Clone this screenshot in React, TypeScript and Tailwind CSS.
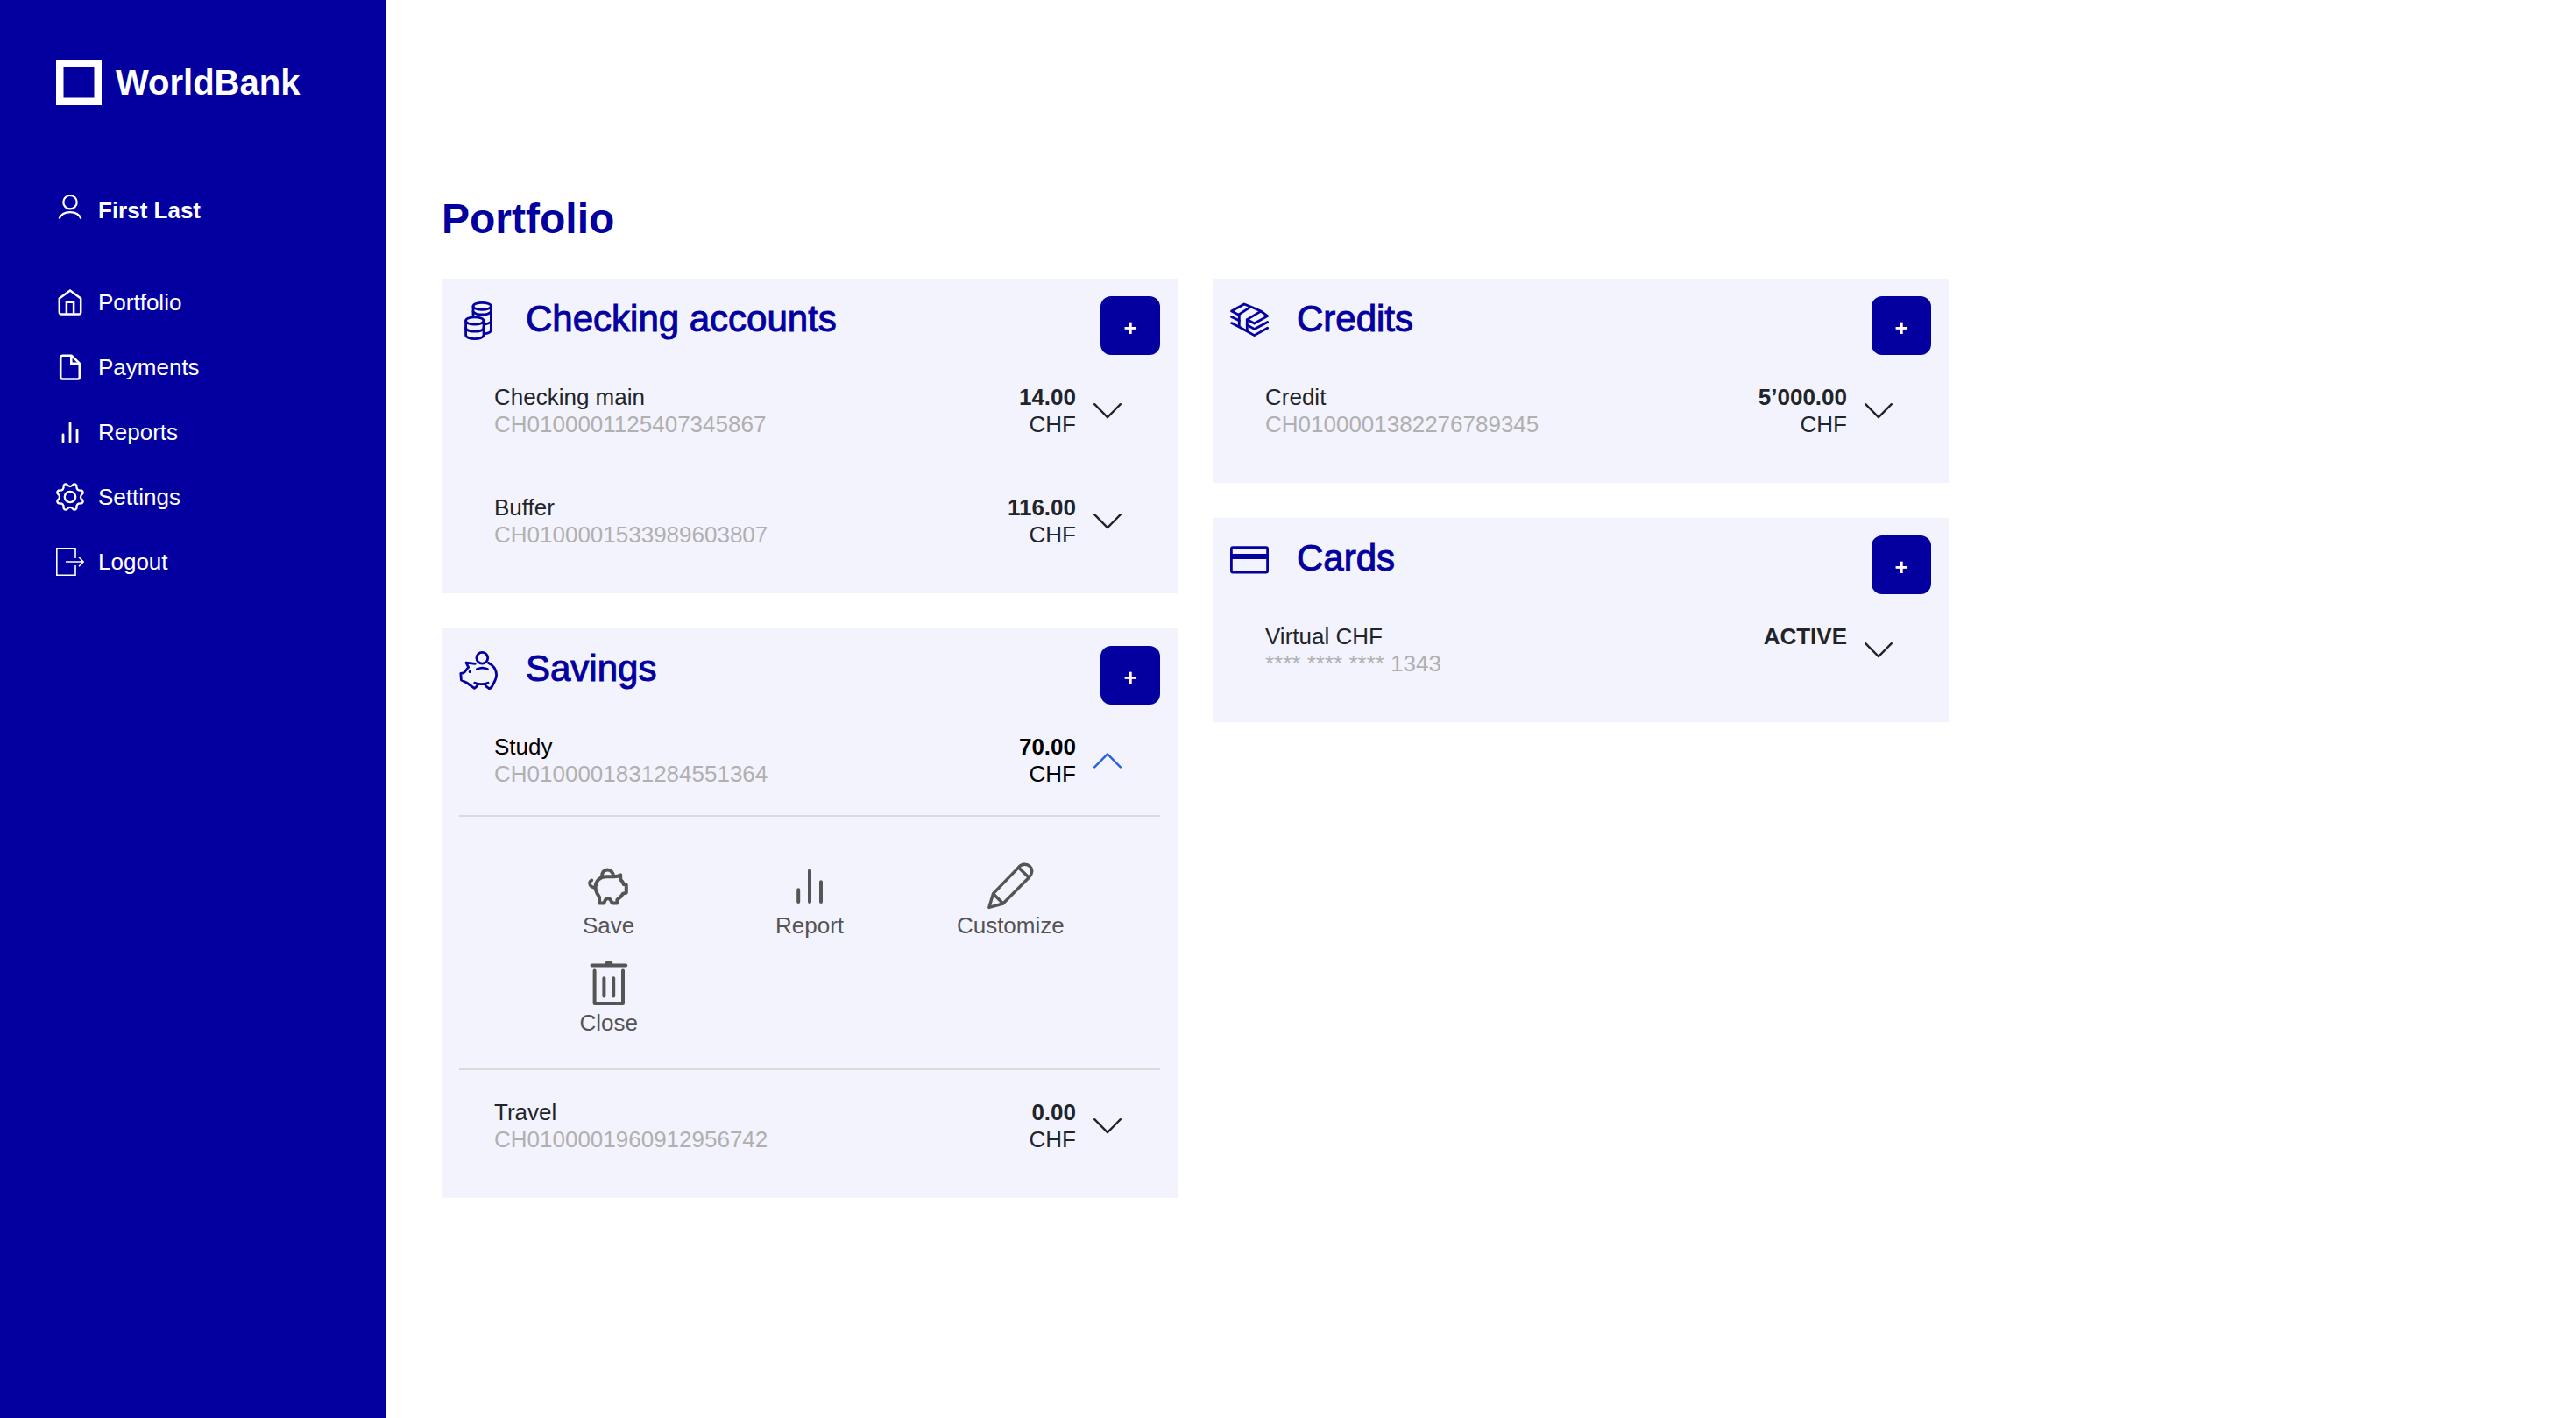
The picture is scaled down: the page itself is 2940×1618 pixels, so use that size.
import type { ReactNode } from "react";

/* ---------- Sidebar icons ---------- */

function UserIcon() {
  return (
    <svg width="32" height="40" viewBox="0 0 32 40" fill="none" stroke="currentColor" strokeWidth="2.200" aria-hidden="true">
      <circle cx="16" cy="10.700" r="7.700" />
      <path d="M3.600 29.600C5.600 24.600 10.400 22.200 16 22.200S26.400 24.600 28.400 29.600" />
    </svg>
  );
}

function HomeIcon() {
  return (
    <svg width="32" height="32" viewBox="0 0 32 32" fill="none" stroke="currentColor" strokeWidth="2.500" strokeLinejoin="round" aria-hidden="true">
      <path d="M3.800 11.400L16 2.400l12.200 9v16a2.200 2.200 0 0 1-2.200 2.200H6a2.200 2.200 0 0 1-2.200-2.200z" />
      <path d="M11.900 29V15.800h8.200V29" strokeLinejoin="miter" />
    </svg>
  );
}

function FileIcon() {
  return (
    <svg width="32" height="32" viewBox="0 0 32 32" fill="none" stroke="currentColor" strokeWidth="2.600" strokeLinejoin="round" aria-hidden="true">
      <path d="M17.500 2.700H7.400a2.200 2.200 0 0 0-2.200 2.200v22.400a2.200 2.200 0 0 0 2.200 2.200h17.200a2.200 2.200 0 0 0 2.200-2.200V11.600z" />
      <path d="M17.300 3v8.800h9" strokeLinejoin="miter" />
    </svg>
  );
}

function BarsIcon() {
  return (
    <svg width="32" height="32" viewBox="0 0 32 32" fill="none" stroke="currentColor" strokeWidth="2.800" strokeLinecap="round" aria-hidden="true">
      <path d="M8 19v8M16 5.600V27M24 13.600V27" />
    </svg>
  );
}

function polar(deg: number, r: number) {
  const a = (deg * Math.PI) / 180;
  return `${(16 + r * Math.cos(a)).toFixed(2)} ${(16 + r * Math.sin(a)).toFixed(2)}`;
}

const gearPath =
  Array.from({ length: 8 }, (_, i) => {
    const a = 22.5 + i * 45;
    return `${i === 0 ? "M" : "L"}${polar(a - 7, 15)}Q${polar(a, 16.4)} ${polar(a + 7, 15)}Q${polar(a + 22.5, 9.4)} ${polar(a + 38, 15)}`;
  }).join("") + "z";

function GearIcon() {
  return (
    <svg width="32" height="32" viewBox="0 0 32 32" fill="none" stroke="currentColor" strokeWidth="2.300" strokeLinejoin="round" className="overflow-visible" aria-hidden="true">
      <path d={gearPath} />
      <circle cx="16" cy="16" r="6.200" />
    </svg>
  );
}

function LogoutIcon() {
  return (
    <svg width="32" height="32" viewBox="0 0 32 32" fill="none" stroke="currentColor" strokeWidth="1.600" aria-hidden="true">
      <path d="M22 12V.8H.8v30.400H22V20" />
      <path d="M11 16h20M26 10.800l5.200 5.200-5.200 5.200" />
    </svg>
  );
}

/* ---------- Card heading icons ---------- */

function HeadingSvg({ children }: { children: ReactNode }) {
  return (
    <svg
      width="44"
      height="44"
      viewBox="0 0 44 44"
      fill="none"
      stroke="currentColor"
      strokeWidth="2.800"
      strokeLinecap="round"
      strokeLinejoin="round"
      className="mt-1.5 shrink-0"
      aria-hidden="true"
    >
      {children}
    </svg>
  );
}

function CoinsIcon() {
  return (
    <HeadingSvg>
      <ellipse cx="26.200" cy="5.400" rx="10.200" ry="4" />
      <path d="M16 5.400V16.600M36.400 5.400v27.400c0 1.800-2.600 3.200-6.200 3.800" />
      <path d="M16 11.600c2 2.400 6 3.400 10.200 3.400s8.200-1 10.200-3.400" />
      <path d="M29.600 25.800c4-.6 6.200-1.600 6.800-3.400" />
      <ellipse cx="17.800" cy="22" rx="10.200" ry="4.200" />
      <path d="M7.600 22v16.200c0 2.600 4.600 4.400 10.200 4.400s10.200-1.800 10.200-4.400V22" />
      <path d="M7.600 30c0 2.600 4.600 4.200 10.200 4.200s10.200-1.600 10.200-4.200" />
    </HeadingSvg>
  );
}

function PiggyCoinIcon() {
  return (
    <HeadingSvg>
      <circle cx="26.300" cy="7.800" r="6.400" />
      <path d="M18.200 14.400L8 13.200l2.600 5.200c-2.600 2.200-3 5.200-5.800 6.400l-3 .6.600 7.600 6.200 3L17.400 42.400l2.800-2.200 1.200-2.600" />
      <path d="M17.800 36.200c4 2 11.400 2 15.200 0M29.600 37.800l1.200 2.400 3.400 2.400c2 .2 2.600-.8 4.200-4 1.600-3.400 4.200-6.800 4.200-11.600 0-6-4-11.600-9.200-13.600" />
      <path d="M20.400 20.600c4-1.800 8.200-1.800 12 0" />
      <circle cx="12.300" cy="23.400" r="1.600" fill="currentColor" stroke="none" />
    </HeadingSvg>
  );
}

function BanknotesIcon() {
  return (
    <HeadingSvg>
      <path d="M10.300 15.400L1.600 11 16 3l9.300 3.700L35 11l7.600 5.600-15 8.400-8.300-4.400" />
      <path d="M22.600 6.600L10.300 14.600v14.200M34.600 11.400L19.300 20.600v12.600" />
      <path d="M1.600 17.600l8.700 4.200M1.600 24.600l8.700 4.400L27.600 38.600 42.600 30.200M19.300 26.800l8.300 4.600L42.600 23.400" />
    </HeadingSvg>
  );
}

function CardIcon() {
  return (
    <HeadingSvg>
      <rect x="1.400" y="7.600" width="41.200" height="28.400" rx="1.600" />
      <path d="M2 18h40" strokeWidth="6" strokeLinecap="butt" />
    </HeadingSvg>
  );
}

/* ---------- Account action icons ---------- */

function ActionSvg({ children, strokeWidth = 4 }: { children: ReactNode; strokeWidth?: number }) {
  return (
    <svg
      width="56"
      height="56"
      viewBox="0 0 56 56"
      fill="none"
      stroke="currentColor"
      strokeWidth={strokeWidth}
      strokeLinecap="round"
      strokeLinejoin="round"
      aria-hidden="true"
    >
      {children}
    </svg>
  );
}

function SaveIcon() {
  return (
    <ActionSvg>
      <path d="M32.600 17.200c3.600.2 6.600-.4 8.600-1.800v5c1.600 1.400 2.800 3.200 3.600 5.600l3 .8v8.800l-3.600 1c-1.600 2.800-3.800 5.200-6.800 6.800v4.200h-5.400c-1.400-.6-1-3.400-3-4.800-1.600-.8-2.800-.8-4.200 0-2 1.400-1.400 4.200-3 4.800h-4.400c-.6-2.600.2-5.400-.8-7.800-2.400-3.400-4-6.200-4-10.400 0-7.200 5.200-12.200 12-12.200z" />
      <path d="M19.800 17.600c0-5.200 2.800-8 6.400-8s7 2.800 7 7.400" />
      <path d="M8.400 21.400c-3.200 1.400-4 6.800 3.200 8.600" strokeWidth="3.600" />
    </ActionSvg>
  );
}

function ReportIcon() {
  return (
    <ActionSvg>
      <path d="M15.200 32.200V46M28 10.600V46M41 23.200V46" />
    </ActionSvg>
  );
}

function PencilIcon() {
  return (
    <ActionSvg strokeWidth={3.4}>
      <path d="M3.800 52.400L8.600 36.600 37.600 6.600C41 2.400 47 2.400 50.400 5.400S53.600 13.800 49.600 18L19.800 48z" />
      <path d="M8.800 37l10.800 10.800M37.600 7l11.400 11" />
    </ActionSvg>
  );
}

function TrashIcon() {
  return (
    <ActionSvg>
      <path d="M8.600 7.600h38.600" />
      <path d="M25.400 5h5" />
      <path d="M11.600 13.600V51h32.400V13.600M22.400 22.200v20.200M33.200 22.200v20.200" />
    </ActionSvg>
  );
}

/* ---------- Sidebar ---------- */

const navItems = [
  { label: "Portfolio", icon: <HomeIcon /> },
  { label: "Payments", icon: <FileIcon /> },
  { label: "Reports", icon: <BarsIcon /> },
  { label: "Settings", icon: <GearIcon /> },
  { label: "Logout", icon: <LogoutIcon /> },
];

function Sidebar() {
  return (
    <aside className="w-[440px] shrink-0 bg-[#0400a0] px-16 pt-17 text-white">
      <a href="#home" className="flex items-center gap-4">
        <svg width="52" height="52" viewBox="0 0 52 52" fill="none" stroke="currentColor" strokeWidth="8.500" aria-hidden="true">
          <rect x="4.250" y="4.250" width="43.500" height="43.500" />
        </svg>
        <span className="text-[40px] leading-[52px] font-bold">WorldBank</span>
      </a>
      <a href="#profile" className="mt-25 flex h-10 items-center gap-4 font-bold">
        <UserIcon />
        First Last
      </a>
      <nav className="mt-16">
        <ul className="flex flex-col gap-8">
          {navItems.map((item) => (
            <li key={item.label}>
              <a href={"#" + item.label.toLowerCase()} className="flex h-[42px] items-center gap-4">
                {item.icon}
                {item.label}
              </a>
            </li>
          ))}
        </ul>
      </nav>
    </aside>
  );
}

/* ---------- Cards ---------- */

function Card({ icon, title, children }: { icon: ReactNode; title: string; children: ReactNode }) {
  return (
    <section className="bg-[#f3f3fd] p-5">
      <header className="flex h-[67px] text-[#0400a0]">
        {icon}
        <h2 className="ml-8 grow text-[42px] leading-[52px] font-normal [-webkit-text-stroke:1px_currentColor]">{title}</h2>
        <button
          type="button"
          aria-label={"Add to " + title}
          className="h-full w-17 rounded-xl bg-[#0400a0] pt-1.5 font-bold text-white"
        >
          +
        </button>
      </header>
      {children}
    </section>
  );
}

type RowProps = { name: string; number: string; amount: string; currency?: string; open?: boolean };

function AccountRow({ name, number, amount, currency, open = false }: RowProps) {
  return (
    <button
      type="button"
      aria-expanded={open}
      className={
        open
          ? "flex w-full items-center pt-[33px] pr-11 pb-[31px] pl-10 text-left text-black"
          : "flex w-full items-center pt-[33px] pr-11 pb-[31px] pl-10 text-left text-[#212529]"
      }
    >
      <span className="grow">
        <span className="block">{name}</span>
        <span className="block text-[#b0b0b0]">{number}</span>
      </span>
      <span className="mr-5 self-start text-right">
        <span className="block font-bold">{amount}</span>
        {currency && <span className="block">{currency}</span>}
      </span>
      <svg
        width="32"
        height="18"
        viewBox="0 0 32 18"
        fill="none"
        stroke="currentColor"
        strokeWidth="2.400"
        strokeLinecap="round"
        strokeLinejoin="round"
        className={open ? "text-[#2962e0]" : ""}
        aria-hidden="true"
      >
        <path d={open ? "M1.200 16.400L16 1.400 30.800 16.400" : "M1.200 1.200L16 16.200 30.800 1.200"} />
      </svg>
    </button>
  );
}

const actions = [
  { label: "Save", icon: <SaveIcon /> },
  { label: "Report", icon: <ReportIcon /> },
  { label: "Customize", icon: <PencilIcon /> },
  { label: "Close", icon: <TrashIcon /> },
];

function ActionPanel() {
  return (
    <div className="grid grid-cols-3 gap-y-[22px] border-y-2 border-[#dadada] px-14 pt-[51px] pb-9 text-[#555555]">
      {actions.map((action) => (
        <button key={action.label} type="button" className="flex flex-col items-center gap-0.5">
          {action.icon}
          {action.label}
        </button>
      ))}
    </div>
  );
}

export default function App() {
  return (
    <div className="flex min-h-screen bg-white font-['Helvetica_Neue','Liberation_Sans',Arial,sans-serif] text-[26px] leading-[31px]">
      <Sidebar />
      <main className="grow px-16 pt-[222px] pb-16">
        <h1 className="text-5xl leading-14 font-bold text-[#0400a0]">Portfolio</h1>
        <div className="mt-10 grid max-w-[1720px] grid-cols-2 items-start gap-10">
          <div className="flex flex-col gap-10">
            <Card icon={<CoinsIcon />} title="Checking accounts">
              <AccountRow name="Checking main" number="CH0100001125407345867" amount="14.00" currency="CHF" />
              <AccountRow name="Buffer" number="CH0100001533989603807" amount="116.00" currency="CHF" />
            </Card>
            <Card icon={<PiggyCoinIcon />} title="Savings">
              <AccountRow name="Study" number="CH0100001831284551364" amount="70.00" currency="CHF" open />
              <ActionPanel />
              <AccountRow name="Travel" number="CH0100001960912956742" amount="0.00" currency="CHF" />
            </Card>
          </div>
          <div className="flex flex-col gap-10">
            <Card icon={<BanknotesIcon />} title="Credits">
              <AccountRow name="Credit" number="CH0100001382276789345" amount="5’000.00" currency="CHF" />
            </Card>
            <Card icon={<CardIcon />} title="Cards">
              <AccountRow name="Virtual CHF" number="**** **** **** 1343" amount="ACTIVE" />
            </Card>
          </div>
        </div>
      </main>
    </div>
  );
}
